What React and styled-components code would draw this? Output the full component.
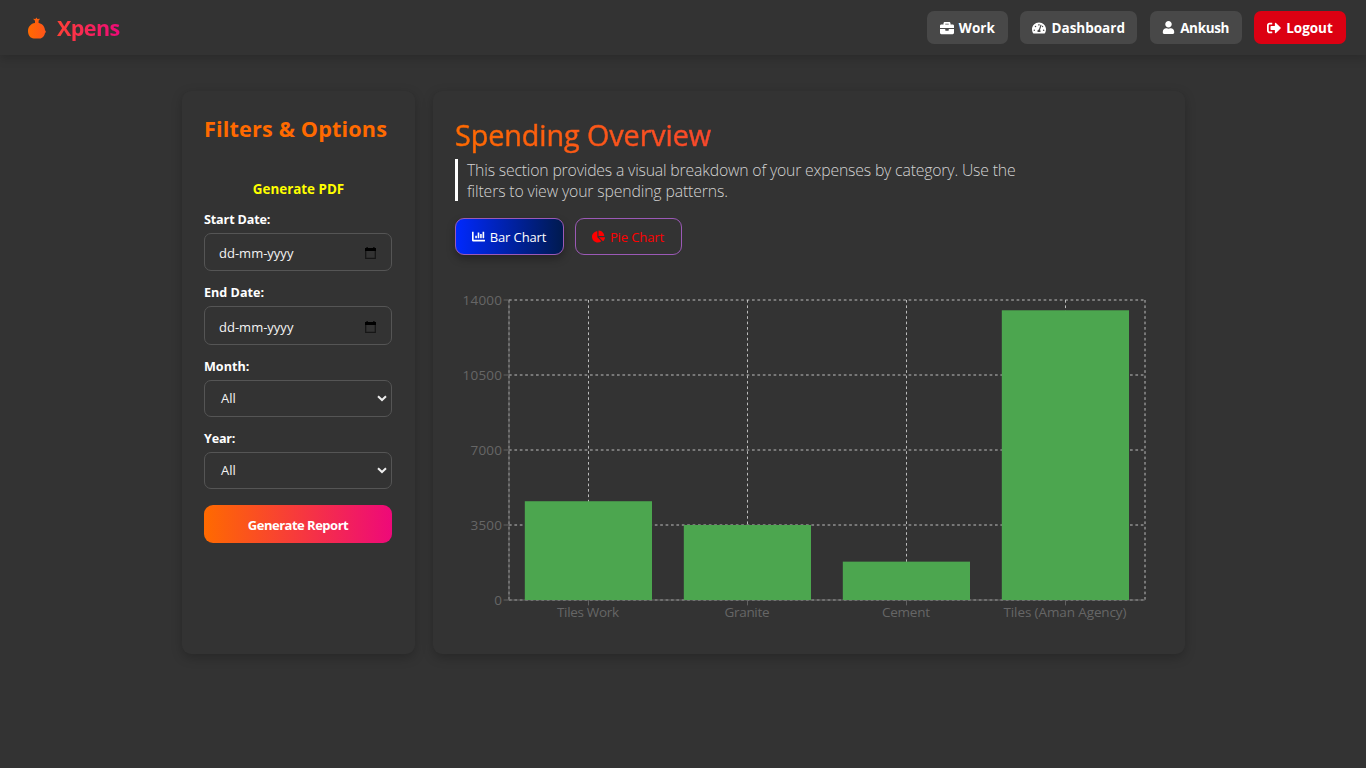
import React from "react";
import styled, { createGlobalStyle, css } from "styled-components";
import { FaBriefcase, FaTachometerAlt, FaUser, FaSignOutAlt, FaChartBar, FaChartPie } from "react-icons/fa";

const GlobalStyle = createGlobalStyle`
  *, *::before, *::after { box-sizing: border-box; }
  body {
    margin: 0;
    background: #333;
    color: #fff;
    font-family: "Segoe UI", "Open Sans", "Noto Sans", sans-serif;
    overflow: hidden;
  }
  button { font-family: inherit; }
`;

const Page = styled.div`
  min-height: 768px;
`;

const Navbar = styled.nav`
  display: flex;
  align-items: center;
  justify-content: space-between;
  height: 55px;
  padding: 0 20px 0 27px;
  background: #333;
  box-shadow: 0 4px 9px rgba(0, 0, 0, 0.16);
`;

const Brand = styled.div`
  display: flex;
  align-items: center;
  gap: 10px;
  height: 55px;
`;

const BrandName = styled.span`
  font-size: 21.6px;
  font-weight: 700;
  line-height: 30px;
  letter-spacing: -0.6px;
  background: linear-gradient(90deg, #ff4136 0%, #ee0979 100%);
  background-clip: text;
  -webkit-background-clip: text;
  color: transparent;
`;

const NavLinks = styled.div`
  display: flex;
  gap: 12.4px;
`;

const NavButton = styled.button`
  display: flex;
  align-items: center;
  justify-content: center;
  gap: 5px;
  width: ${(p) => p.$width}px;
  height: 33px;
  padding: 0;
  border: 0;
  border-radius: 7px;
  background: ${(p) => (p.$danger ? "#dc0012" : "#484848")};
  color: #fff;
  font-size: 13.5px;
  font-weight: 700;
  letter-spacing: ${(p) => p.$spacing || 0}px;
  white-space: nowrap;
`;

const Main = styled.main`
  display: flex;
  gap: 18px;
  width: 1003px;
  height: 563px;
  margin: 36px 0 0 182px;
`;

const panel = css`
  background: #333;
  border-radius: 9px;
  box-shadow: 0 3.6px 10.8px rgba(0, 0, 0, 0.22);
`;

const Sidebar = styled.aside`
  ${panel}
  width: 233px;
  padding: 22px 23px 0 22px;
`;

const SidebarTitle = styled.h2`
  margin: 0;
  font-size: 21.6px;
  line-height: 32px;
  font-weight: 700;
  letter-spacing: 0.17px;
  white-space: nowrap;
  color: #ff6a00;
`;

const PdfLink = styled.div`
  margin-top: 34px;
  margin-bottom: 10px;
  padding-left: 1px;
  font-size: 13.4px;
  line-height: 20px;
  font-weight: 700;
  text-align: center;
  color: #ff0;
`;

const Fields = styled.div`
  display: flex;
  flex-direction: column;
  gap: 11px;
`;

const Label = styled.div`
  height: 24px;
  padding-top: 1px;
  font-size: 12.6px;
  line-height: 20px;
  font-weight: 700;
  letter-spacing: ${(p) => p.$spacing || 0}px;
`;

const Control = styled.div`
  display: flex;
  align-items: center;
  justify-content: space-between;
  height: ${(p) => (p.$select ? 37 : 38.4)}px;
  padding: ${(p) => (p.$select ? "0 4px 0 16px" : "2px 15px 0 14px")};
  border: 1px solid #555;
  border-radius: 7px;
  font-size: 13px;
  color: #f4f4f4;
`;

const ReportButton = styled.button`
  width: 188px;
  height: 38px;
  margin-top: 16px;
  padding: 2px 0 0;
  border: 0;
  border-radius: 9px;
  background: linear-gradient(90deg, #ff6a00, #ee0979);
  color: #fff;
  font-size: 13px;
  font-weight: 700;
  letter-spacing: -0.5px;
`;

const Overview = styled.section`
  ${panel}
  width: 752px;
  padding: 23px 22px 0;
`;

const OverviewTitle = styled.h1`
  margin: 0;
  font-size: 28.8px;
  line-height: 42px;
  font-weight: 400;
  letter-spacing: -0.1px;
  background: linear-gradient(90deg, #ff6a00, #ee0979);
  background-clip: text;
  -webkit-background-clip: text;
  color: transparent;
  -webkit-text-stroke: 0.5px transparent;
`;

const Description = styled.p`
  width: 576px;
  margin: 3px 0 0;
  padding-left: 9px;
  border-left: 3px solid #fff;
  font-size: 15.8px;
  line-height: 21px;
  font-weight: 300;
  color: #d2d2d2;
`;

const Line = styled.span`
  display: block;
  position: relative;
  top: 1px;
  white-space: nowrap;
  letter-spacing: ${(p) => p.$spacing}px;
`;

const ChartTabs = styled.div`
  display: flex;
  gap: 11px;
  margin-top: 17px;
`;

const ChartTab = styled.button`
  display: flex;
  align-items: center;
  justify-content: center;
  gap: 5px;
  width: ${(p) => p.$width}px;
  height: 37px;
  padding: 0 1px 0 0;
  border: 1px solid #9b59b6;
  border-radius: 9px;
  background: ${(p) => (p.$active ? "linear-gradient(90deg, #0029ff, #001a4d) border-box" : "transparent")};
  box-shadow: ${(p) => (p.$active ? "0 4px 9px rgba(0, 0, 0, 0.3)" : "none")};
  color: ${(p) => (p.$active ? "#fff" : "#f00")};
  font-size: 13px;
  letter-spacing: -0.1px;
  white-space: nowrap;
`;

const TabText = styled.span`
  padding-top: 1px;
`;

const Chart = styled.svg`
  display: block;
  margin-top: 30px;
`;

const bars = [
  { name: "Tiles Work", value: 4610, width: 62 },
  { name: "Granite", value: 3500, width: 45 },
  { name: "Cement", value: 1790, width: 48 },
  { name: "Tiles (Aman Agency)", value: 13520, width: 123 },
];
const ticks = [14000, 10500, 7000, 3500, 0];
const AXIS_X = 54;
const TOP = 15;
const PLOT_W = 636;
const PLOT_H = 300;
const BAND = PLOT_W / bars.length;
const yOf = (v) => TOP + PLOT_H * (1 - v / 14000);
const xOf = (i) => AXIS_X + BAND * (i + 0.5);

function BarChart() {
  const bottom = TOP + PLOT_H;
  const right = AXIS_X + PLOT_W;
  return (
    <Chart width="707" height="346">
      <g stroke="#ccc" strokeWidth="0.9" strokeDasharray="2.7 2.7">
        {ticks.map((t) => (
          <line key={t} x1={AXIS_X} y1={yOf(t)} x2={right} y2={yOf(t)} />
        ))}
        {bars.map((b, i) => (
          <line key={b.name} x1={xOf(i)} y1={TOP} x2={xOf(i)} y2={bottom} />
        ))}
        <line x1={AXIS_X} y1={TOP} x2={AXIS_X} y2={bottom} />
        <line x1={right} y1={TOP} x2={right} y2={bottom} />
      </g>
      <g stroke="#666" strokeWidth="0.9">
        <line x1={AXIS_X} y1={TOP} x2={AXIS_X} y2={bottom} />
        <line x1={AXIS_X} y1={bottom} x2={right} y2={bottom} />
        {ticks.map((t) => (
          <line key={t} x1={AXIS_X - 5.4} y1={yOf(t)} x2={AXIS_X} y2={yOf(t)} />
        ))}
        {bars.map((b, i) => (
          <line key={b.name} x1={xOf(i)} y1={bottom} x2={xOf(i)} y2={bottom + 5.4} />
        ))}
      </g>
      {bars.map((b, i) => (
        <rect key={b.name} x={xOf(i) - 63.7} y={yOf(b.value)} width="127.2" height={bottom - yOf(b.value)} fill="#4ca64f" />
      ))}
      <g fill="#666" fontSize="13.5">
        {ticks.map((t) => (
          <text key={t} x={47} y={yOf(t) + 5} textAnchor="end" textLength={String(t).length * 8 - 0.5}>
            {t}
          </text>
        ))}
        {bars.map((b, i) => (
          <text key={b.name} x={xOf(i) - 0.5} y={bottom + 17} textAnchor="middle" textLength={b.width}>
            {b.name}
          </text>
        ))}
      </g>
    </Chart>
  );
}

const MoneyBag = () => (
  <svg width="20" height="22" viewBox="0 0 20 22">
    <defs>
      <linearGradient id="bag" x1="0" x2="1">
        <stop offset="0" stopColor="#ff6a00" />
        <stop offset="1" stopColor="#fe541b" />
      </linearGradient>
    </defs>
    <path
      fill="url(#bag)"
      d="M6 1.7 L8.4 1.9 L9.4 0.4 L10.4 1.9 L13 1.7 L11.6 3.8 V6 C14.6 6.3 17.6 9 18 13 L19 15 L18 16 C17.6 19 15.4 21.4 12.6 21.6 H6.8 C3.4 21.2 1 18.2 1 14 C1 10 3.8 6.4 8 6 V3.8 Z"
    />
  </svg>
);

const CalendarIcon = () => (
  <svg width="11" height="12" viewBox="0 0 11 12">
    <path d="M0.7 2.5 H10.3 V11.3 H0.7 Z" fill="none" stroke="#161616" strokeWidth="1.2" />
    <path d="M0 1 H1.5 V0 H2.7 V1 H8.3 V0 H9.5 V1 H11 V4 H0 Z" fill="#000" />
  </svg>
);

const Chevron = () => (
  <svg width="10" height="7" viewBox="0 0 10 7">
    <path d="M1 1.2 L5 5 L9 1.2" fill="none" stroke="#eee" strokeWidth="2" />
  </svg>
);

export default function App() {
  return (
    <Page>
      <GlobalStyle />
      <Navbar>
        <Brand>
          <MoneyBag />
          <BrandName>Xpens</BrandName>
        </Brand>
        <NavLinks>
          <NavButton $width={81}><FaBriefcase size={14} />Work</NavButton>
          <NavButton $width={117}><FaTachometerAlt size={14} />Dashboard</NavButton>
          <NavButton $width={92} $spacing={-0.35}><FaUser size={13} />Ankush</NavButton>
          <NavButton $width={92} $danger><FaSignOutAlt size={14} />Logout</NavButton>
        </NavLinks>
      </Navbar>
      <Main>
        <Sidebar>
          <SidebarTitle>Filters &amp; Options</SidebarTitle>
          <PdfLink>Generate PDF</PdfLink>
          <Fields>
            <div>
              <Label $spacing={-0.15}>Start Date:</Label>
              <Control>dd-mm-yyyy<CalendarIcon /></Control>
            </div>
            <div>
              <Label>End Date:</Label>
              <Control>dd-mm-yyyy<CalendarIcon /></Control>
            </div>
            <div>
              <Label>Month:</Label>
              <Control $select>All<Chevron /></Control>
            </div>
            <div>
              <Label $spacing={-0.2}>Year:</Label>
              <Control $select>All<Chevron /></Control>
            </div>
          </Fields>
          <ReportButton>Generate Report</ReportButton>
        </Sidebar>
        <Overview>
          <OverviewTitle>Spending Overview</OverviewTitle>
          <Description>
            <Line $spacing={-0.18}>This section provides a visual breakdown of your expenses by category. Use the</Line>
            <Line $spacing={-0.14}>filters to view your spending patterns.</Line>
          </Description>
          <ChartTabs>
            <ChartTab $width={109} $active><FaChartBar size={13} /><TabText>Bar Chart</TabText></ChartTab>
            <ChartTab $width={107}><FaChartPie size={13} /><TabText>Pie Chart</TabText></ChartTab>
          </ChartTabs>
          <BarChart />
        </Overview>
      </Main>
    </Page>
  );
}
